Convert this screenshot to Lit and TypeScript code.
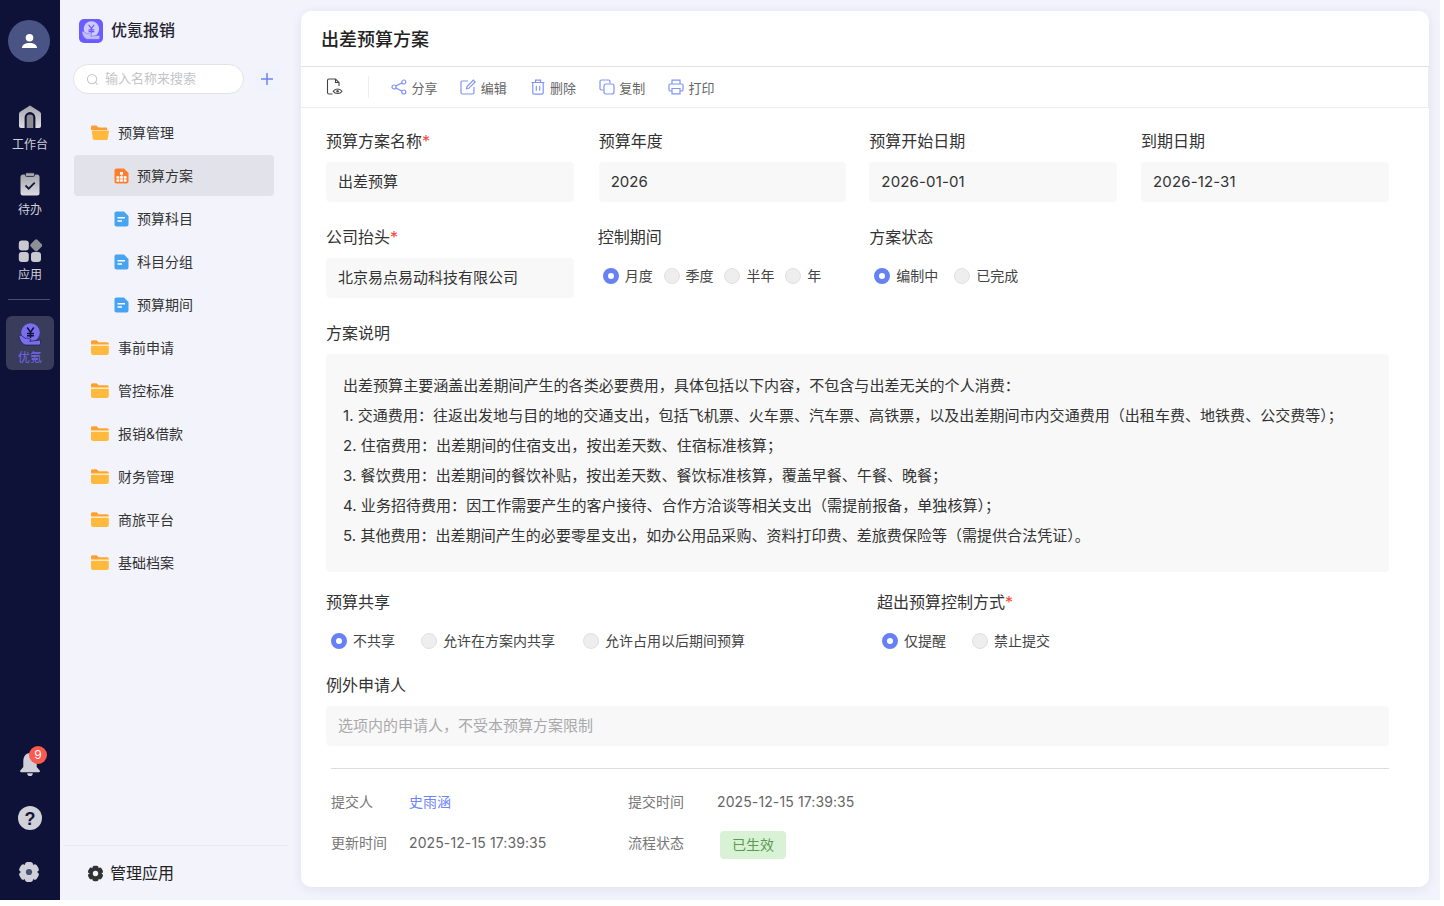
import { LitElement, html, css, svg } from 'lit';
import { customElement } from 'lit/decorators.js';

const railGrad = svg`<defs><linearGradient id="rg" x1="0" y1="0" x2="0" y2="1"><stop offset="0" stop-color="#a4a5aa"/><stop offset="1" stop-color="#dcdce2"/></linearGradient></defs>`;

const coinHand = (coin: string, hand: string, mark: string) => svg`
  <circle cx="12.5" cy="9.500" r="9.300" fill=${coin}/>
  <path d="M12.500 9.500V15M9 10.500h7M9 12.700h7M9.200 4.500l3.300 4.600 3.300-4.600" fill="none" stroke=${mark} stroke-width="1.500"/>
  <path d="M1 13.200c.6-1.200 1.600-1.200 2.600-.5l3.600 2.600c1.800-.6 4.400.2 6 1.600l-1.600 1.400 6-.6 4.900-.7v3.600c0 .9-.6 1.400-1.400 1.400H8.400c-3.600 0-6.400-3.800-7.400-8.800z" fill=${hand} stroke=${mark} stroke-width=".6"/>`;

const gear = (fill: string, hole: string, r: number) => svg`
  ${[0, 60, 120, 180, 240, 300].map(
    (a) => svg`<rect x="7.600" y="1" width="8.800" height="8" rx="3" fill=${fill} transform="rotate(${a} 12 12)"/>`
  )}
  <circle cx="12" cy="12" r="7.500" fill=${fill}/>
  <circle cx="12" cy="12" r=${r} fill=${hole}/>`;

const icons = {
  home: svg`<svg viewBox="0 0 24 24" width="24" height="24">${railGrad}
    <path d="M12 .5 21.800 6.700c.8.500 1.200 1.200 1.200 2.100V21c0 1.300-.8 2-2 2h-3.600V12.500a5.400 5.400 0 0 0-10.800 0V23H3c-1.200 0-2-.7-2-2V8.800c0-.9.400-1.600 1.200-2.100z" fill="url(#rg)"/>
    <path d="M8.700 23V12.700a3.300 3.300 0 0 1 6.600 0V23z" fill="#8b8c92"/></svg>`,
  todo: svg`<svg viewBox="0 0 24 24" width="24" height="24">${railGrad}
    <rect x="2.500" y="2.500" width="19" height="21" rx="2.500" fill="url(#rg)"/>
    <rect x="7.500" y=".8" width="9" height="3.600" rx="1" fill="#aaabb0" stroke="#0e1238" stroke-width=".8"/>
    <path d="m7.500 13.500 3.200 3.200 6-6" fill="none" stroke="#14173a" stroke-width="1.800"/></svg>`,
  apps: svg`<svg viewBox="0 0 24 24" width="24" height="24">
    <rect x=".8" y="1.500" width="10" height="10" rx="3" fill="#c9cacf"/>
    <rect x="13.500" y="1.600" width="9.500" height="9.500" rx="2" fill="#8f9095" transform="rotate(45 18.200 6.300)"/>
    <rect x=".8" y="13" width="10" height="10" rx="3" fill="#c9cacf"/>
    <rect x="13" y="13" width="10" height="10" rx="3" fill="#c9cacf"/></svg>`,
  bell: svg`<svg viewBox="0 0 24 24" width="24" height="24">
    <path d="M12 1C7.500 1 5.300 5 5.300 9.500V15l-3 3.500c-.6.800-.2 1.700.8 1.700h17.800c1 0 1.400-.9.800-1.700l-3-3.500V9.500C18.700 5 16.500 1 12 1z" fill="#cfd0d8"/>
    <path d="M9.200 21.200h5.600a2.800 2.800 0 0 1-5.600 0z" fill="#cfd0d8"/></svg>`,
  help: svg`<svg viewBox="0 0 24 24" width="24" height="24"><circle cx="12" cy="12" r="12" fill="#cfd0d8"/>
    <text x="12" y="18.500" text-anchor="middle" font-size="18" font-weight="700" font-family="Liberation Sans, sans-serif" fill="#14173a">?</text></svg>`,
  search: svg`<svg viewBox="0 0 14 14" width="13" height="13"><circle cx="6.500" cy="6.500" r="5" fill="none" stroke="#c4c5ca" stroke-width="1.100"/><path d="m10.200 10.200 2.300 2.300" stroke="#c4c5ca" stroke-width="1.100"/></svg>`,
  plus: svg`<svg viewBox="0 0 14 14" width="14" height="14"><path d="M7 1v12M1 7h12" stroke="#6c82f0" stroke-width="1.500"/></svg>`,
  folderOpen: svg`<svg viewBox="0 0 18 16" width="18" height="16">
    <path d="M0 2c0-.8.500-1.500 1.500-1.500h4L7.500 2.500H15c.8 0 1.200.4 1.200 1.200V5H0z" fill="#ff9d33"/>
    <path d="M1.600 13 .8 6.500c0-.6.400-1 1-1H17c.7 0 1.100.4 1 1l-1.300 7.300c-.1.800-.7 1.200-1.400 1.200H3.300C2.400 15 1.700 14 1.600 13z" fill="#ffb93d"/></svg>`,
  folder: svg`<svg viewBox="0 0 18 16" width="18" height="16">
    <path d="M1.500.5h4.200l2 2H16c1 0 1.800.8 1.800 1.800V13c0 1.100-.9 2-2 2H2c-1.100 0-2-.9-2-2V2C0 1.200.7.500 1.500.5z" fill="#ffb93d"/>
    <path d="M0 2C0 1.200.7.500 1.500.5h4.200l2 2H16c.9 0 1.500.5 1.700 1.200H0z" fill="#ff9d33"/>
    <path d="M0 5.200h18" stroke="#fff" stroke-width="1"/></svg>`,
  doc: svg`<svg viewBox="0 0 15 16" width="15" height="16">
    <path d="M2.500.5H10l4.500 4.500v8.500c0 1.200-.9 2-2 2h-10c-1.200 0-2-.8-2-2v-11c0-1.100.8-2 2-2z" fill="#46a4f3"/>
    <path d="M3.500 6.700h7.500M3.500 10h4.500" stroke="#fff" stroke-width="1.400"/></svg>`,
  org: svg`<svg viewBox="0 0 15 16" width="15" height="16">
    <path d="M2.500.5H10l4.500 4.500v8.500c0 1.200-.9 2-2 2h-10c-1.200 0-2-.8-2-2v-11c0-1.100.8-2 2-2z" fill="#ff7d2e"/>
    <g fill="#fff"><rect x="6" y="4" width="3" height="2.800"/><rect x="7.200" y="6.800" width=".6" height="1.400"/>
    <rect x="2.500" y="8.200" width="2.800" height="2.400"/><rect x="6.100" y="8.200" width="2.800" height="2.400"/><rect x="9.700" y="8.200" width="2.800" height="2.400"/>
    <rect x="2.500" y="11.300" width="2.800" height="2.400"/><rect x="6.100" y="11.300" width="2.800" height="2.400"/><rect x="9.700" y="11.300" width="2.800" height="2.400"/></g></svg>`,
  docEye: svg`<svg viewBox="0 0 18 18" width="18" height="18" fill="none" stroke="#444" stroke-width="1.100">
    <path d="M6.500 16H3c-.9 0-1.500-.6-1.500-1.500V2.500C1.500 1.600 2.100 1 3 1h6.500L13 4.500V8"/><path d="M9.500 1v3.500H13"/>
    <path d="M7.200 13.200c1.800-3 7-3 8.800 0-1.800 3-7 3-8.800 0z"/><circle cx="11.600" cy="13.200" r="1.200" fill="#444" stroke="none"/></svg>`,
  share: svg`<svg viewBox="0 0 16 16"><circle cx="3" cy="8" r="2"/><circle cx="12.800" cy="3" r="2"/><circle cx="12.800" cy="13" r="2"/><path d="m4.800 7 6.200-3.100M4.800 9l6.200 3.100"/></svg>`,
  edit: svg`<svg viewBox="0 0 16 16"><path d="M8 2H2.500C1.600 2 1 2.600 1 3.500v10c0 .9.600 1.500 1.500 1.500h10c.9 0 1.500-.6 1.500-1.500V8"/><path d="m6.500 9.800.5-2.300L13.300 1.200l1.800 1.800-6.300 6.300z"/></svg>`,
  trash: svg`<svg viewBox="0 0 16 16"><path d="M1.500 3.500h13M5.500 3.500V1.200h5v2.300"/><path d="M2.800 3.500v10.300c0 .8.500 1.300 1.300 1.300h7.800c.8 0 1.300-.5 1.300-1.300V3.500"/><path d="M6.300 6.800v5M9.700 6.800v5"/></svg>`,
  copy: svg`<svg viewBox="0 0 16 16"><path d="M4.300 11H2.500C1.600 11 1 10.400 1 9.500v-7C1 1.600 1.600 1 2.500 1h7c.9 0 1.500.6 1.500 1.500v1.800"/><rect x="5" y="5" width="10" height="10" rx="2"/></svg>`,
  print: svg`<svg viewBox="0 0 16 16"><path d="M4 5V1.200h8V5"/><path d="M4 12H2.300C1.500 12 1 11.500 1 10.700V6.300C1 5.500 1.500 5 2.300 5h11.400c.8 0 1.300.5 1.300 1.300v4.400c0 .8-.5 1.300-1.300 1.300H12"/><path d="M4 9.500h8v5.300H4z"/></svg>`,
};

const rail = [
  { icon: icons.home, label: '工作台', cls: 'top0' },
  { icon: icons.todo, label: '待办', cls: 'top2' },
  { icon: icons.apps, label: '应用', cls: 'top4' },
];

const tree = [
  { label: '预算管理', open: true, kids: [
    { label: '预算方案', icon: icons.org, active: true },
    { label: '预算科目', icon: icons.doc },
    { label: '科目分组', icon: icons.doc },
    { label: '预算期间', icon: icons.doc },
  ] },
  { label: '事前申请' },
  { label: '管控标准' },
  { label: '报销&借款' },
  { label: '财务管理' },
  { label: '商旅平台' },
  { label: '基础档案' },
];

const tools = [
  { icon: icons.share, label: '分享' },
  { icon: icons.edit, label: '编辑' },
  { icon: icons.trash, label: '删除' },
  { icon: icons.copy, label: '复制' },
  { icon: icons.print, label: '打印' },
];

const notes = [
  '出差预算主要涵盖出差期间产生的各类必要费用，具体包括以下内容，不包含与出差无关的个人消费：',
  '1. 交通费用：往返出发地与目的地的交通支出，包括飞机票、火车票、汽车票、高铁票，以及出差期间市内交通费用（出租车费、地铁费、公交费等）；',
  '2. 住宿费用：出差期间的住宿支出，按出差天数、住宿标准核算；',
  '3. 餐饮费用：出差期间的餐饮补贴，按出差天数、餐饮标准核算，覆盖早餐、午餐、晚餐；',
  '4. 业务招待费用：因工作需要产生的客户接待、合作方洽谈等相关支出（需提前报备，单独核算）；',
  '5. 其他费用：出差期间产生的必要零星支出，如办公用品采购、资料打印费、差旅费保险等（需提供合法凭证）。',
];

@customElement('app-root')
export class AppRoot extends LitElement {
  static styles = css`
    :host {
      display: flex;
      width: 1440px;
      height: 900px;
      overflow: hidden;
      background: #f2f3fb;
      color: #333;
      font-family: Inter, 'Noto Sans CJK SC', sans-serif;
      font-size: 14px;
    }
    svg { display: block; flex: none; }

    /* far left rail */
    .rail {
      width: 60px;
      flex: none;
      background: #0e1238;
      display: flex;
      flex-direction: column;
      align-items: center;
      padding-top: 20px;
      box-sizing: border-box;
    }
    .avatar {
      width: 42px;
      height: 42px;
      border-radius: 50%;
      background: #4a5484;
      display: flex;
      align-items: center;
      justify-content: center;
      margin: 0 2px 43px 0;
    }
    .rail-item {
      height: 65px;
      color: #cfd0d8;
      font-size: 12px;
      line-height: 16px;
      text-align: center;
    }
    .rail-icon { height: 32px; box-sizing: border-box; display: flex; justify-content: center; }
    .rail-icon.top2 { padding-top: 2px; }
    .rail-icon.top4 { padding-top: 4px; }
    .rail-line { width: 42px; height: 1px; background: #4a4d68; margin: -1px 2px 16px 0; }
    .rail-active {
      width: 48px;
      height: 54px;
      border-radius: 6px;
      background: #3a3c5c;
      color: #7468ea;
      font-size: 12px;
      line-height: 16px;
      display: flex;
      flex-direction: column;
      align-items: center;
      padding-top: 7px;
      box-sizing: border-box;
      gap: 3px;
    }
    .rail-foot {
      margin-top: auto;
      display: flex;
      flex-direction: column;
      align-items: center;
      gap: 30px;
      padding-bottom: 17px;
    }
    .bell { position: relative; }
    .badge {
      position: absolute;
      top: -6px;
      left: 11px;
      width: 18px;
      height: 18px;
      border-radius: 50%;
      background: #fb5a4e;
      color: #fff;
      font-size: 12px;
      line-height: 18px;
      text-align: center;
    }
    .gear-rail { margin: 1px 2px 0 0; }

    /* tree panel */
    .panel {
      width: 230px;
      flex: none;
      display: flex;
      flex-direction: column;
      box-sizing: border-box;
      padding-left: 3px;
    }
    .brand {
      display: flex;
      align-items: center;
      gap: 8px;
      height: 24px;
      padding: 19px 0 0 16px;
      font-size: 16px;
      font-weight: 500;
      color: #1f2230;
      line-height: 24px;
    }
    .brand span.txt { margin-bottom: 2px; }
    .logo {
      width: 24px;
      height: 24px;
      border-radius: 5px;
      background: #6a5cff;
      display: flex;
      align-items: center;
      justify-content: center;
    }
    .search-row {
      display: flex;
      align-items: center;
      padding: 21px 0 0 10px;
      gap: 11px;
    }
    .search {
      width: 171px;
      height: 30px;
      box-sizing: border-box;
      border: 1px solid #e3e3e7;
      border-radius: 15px;
      background: #fff;
      display: flex;
      align-items: center;
      gap: 6px;
      padding-left: 12px;
      font-size: 13px;
      color: #c4c5ca;
    }
    .search span { margin-bottom: 3px; }
    .plus {
      width: 24px;
      height: 24px;
      border-radius: 4px;
      background: #f0f2fc;
      display: flex;
      align-items: center;
      justify-content: center;
    }
    .tree { padding: 18px 0 0 11px; flex: 1; }
    .node {
      width: 200px;
      height: 41px;
      margin-bottom: 2px;
      border-radius: 4px;
      display: flex;
      align-items: center;
      gap: 9px;
      padding-left: 17px;
      box-sizing: border-box;
      color: #333;
    }
    .node span { margin-bottom: 2px; }
    .node.kid { padding-left: 40px; gap: 8px; }
    .node.active { background: #e2e3ea; }
    .panel-foot {
      margin: 0 2px 0 0;
      height: 54px;
      border-top: 1px solid #e8e8ee;
      display: flex;
      align-items: center;
      gap: 6px;
      padding-left: 24px;
      font-size: 16px;
      color: #222;
    }
    .panel-foot span { margin-bottom: 3px; }

    /* card */
    .card {
      margin: 11px 0 13px 11px;
      width: 1128px;
      background: #fff;
      border-radius: 10px;
      box-shadow: 0 2px 12px rgba(30, 40, 90, 0.08);
      display: flex;
      flex-direction: column;
    }
    .title {
      height: 55px;
      line-height: 57px;
      padding-left: 20px;
      font-size: 18px;
      font-weight: 500;
      color: #222;
      border-bottom: 1px solid #e3e3e6;
    }
    .toolbar {
      height: 40px;
      display: flex;
      align-items: center;
      padding-left: 25px;
      border-bottom: 1px solid #ececef;
      border-right: 1px solid #ececef;
      font-size: 13px;
      color: #666;
    }
    .tool-sep { width: 1px; height: 22px; background: #eeeef0; margin: 0 22px 0 24px; }
    .tool { display: flex; align-items: center; gap: 4.5px; margin-right: 22.75px; }
    .tool svg {
      width: 16px;
      height: 16px;
      fill: none;
      stroke: #8094f5;
      stroke-width: 1.2;
    }

    .form { padding: 21px 40px 0 25px; }
    .grid4 {
      display: grid;
      grid-template-columns: repeat(4, 1fr);
      column-gap: 23.67px;
      margin-bottom: 23px;
    }
    .nudge { margin-left: 1px; }
    .grid2 {
      display: grid;
      grid-template-columns: 551px 1fr;
      margin-bottom: 14px;
    }
    .label {
      font-size: 16px;
      line-height: 24px;
      margin-bottom: 9px;
      color: #333;
    }
    .label i { color: #f5483b; font-style: normal; }
    .input {
      height: 40px;
      line-height: 40px;
      border-radius: 4px;
      background: #f8f8f8;
      padding-left: 12px;
      font-size: 15px;
      color: #333;
    }
    .input.num { letter-spacing: 0.15px; }
    .input.ph { color: #a9a9ad; }
    .radios { height: 36px; display: flex; align-items: center; padding-left: 5px; }
    .radio { display: flex; align-items: center; gap: 6px; color: #444; }
    .radio span { margin-bottom: 2px; }
    .radio i {
      width: 16px;
      height: 16px;
      box-sizing: border-box;
      border-radius: 50%;
      background: #eee;
      border: 1px solid #e0e0e0;
    }
    .radio.on i { background: #fff; border: 5px solid #6680f5; }
    .gap-s { gap: 10.9px; }
    .gap-m { gap: 16px; }
    .gap-l { gap: 26px; }
    .gap-l .radio:nth-child(3) { margin-left: 2px; }
    .notes {
      background: #f8f8f8;
      border-radius: 4px;
      padding: 17px 17px 21px;
      margin-bottom: 18px;
      font-size: 15px;
      line-height: 30px;
      letter-spacing: 0.04px;
      color: #333;
    }
    .meta {
      margin: 22px 0 0 5px;
      border-top: 1px solid #dcdcde;
      padding-top: 19px;
      display: grid;
      grid-template-columns: 78px 219px 89px 1fr;
      grid-auto-rows: 28px;
      row-gap: 13px;
      line-height: 28px;
      color: #666;
    }
    .meta .k { color: #777; }
    .meta .num { letter-spacing: 0.11px; }
    .link { color: #6d86f5; }
    .state {
      display: inline-block;
      margin: 2px 0 0 3px;
      width: 66px;
      height: 28px;
      border-radius: 4px;
      background: #d9f2d5;
      color: #5a9a55;
      text-align: center;
    }
  `;

  private radios(items: string[], gap: string) {
    return html`<div class="radios ${gap}">
      ${items.map((r, i) => html`<label class="radio ${i === 0 ? 'on' : ''}"><i></i><span>${r}</span></label>`)}
    </div>`;
  }

  private field(label: string, value: string, opts: { req?: boolean; num?: boolean; nudge?: boolean } = {}) {
    return html`<div class=${opts.nudge ? 'nudge' : ''}>
      <div class="label">${label}${opts.req ? html`<i>*</i>` : ''}</div>
      <div class="input ${opts.num ? 'num' : ''}">${value}</div>
    </div>`;
  }

  render() {
    return html`
      <nav class="rail">
        <div class="avatar">
          <svg viewBox="0 0 18 18" width="17" height="17"><circle cx="9" cy="5" r="4" fill="#fff"/><path d="M1 16c0-3.500 3.500-5.500 8-5.500s8 2 8 5.500z" fill="#fff"/></svg>
        </div>
        ${rail.map((r) => html`<div class="rail-item"><div class="rail-icon ${r.cls}">${r.icon}</div><span>${r.label}</span></div>`)}
        <div class="rail-line"></div>
        <div class="rail-active">
          <svg viewBox="0 0 24 24" width="24" height="24">${coinHand('#7b6ff0', '#7b6ff0', '#0e1238')}</svg>
          <span>优氪</span>
        </div>
        <div class="rail-foot">
          <div class="bell">${icons.bell}<span class="badge">9</span></div>
          ${icons.help}
          <svg class="gear-rail" viewBox="0 0 24 24" width="22" height="22">${gear('#cfd0d8', '#4a4f7a', 3.400)}</svg>
        </div>
      </nav>

      <aside class="panel">
        <div class="brand">
          <span class="logo"><svg viewBox="0 0 24 24" width="20" height="20">${coinHand('#cfcbff', '#c3beff', '#6a5cff')}</svg></span>
          <span class="txt">优氪报销</span>
        </div>
        <div class="search-row">
          <div class="search">${icons.search}<span>输入名称来搜索</span></div>
          <span class="plus">${icons.plus}</span>
        </div>
        <div class="tree">
          ${tree.map((n) => html`
            <div class="node">${n.open ? icons.folderOpen : icons.folder}<span>${n.label}</span></div>
            ${(n.kids ?? []).map((k) => html`
              <div class="node kid ${k.active ? 'active' : ''}">${k.icon}<span>${k.label}</span></div>
            `)}
          `)}
        </div>
        <div class="panel-foot">
          <svg viewBox="0 0 24 24" width="17" height="17">${gear('#333', '#f2f3fb', 3.800)}</svg>
          <span>管理应用</span>
        </div>
      </aside>

      <main class="card">
        <div class="title">出差预算方案</div>
        <div class="toolbar">
          ${icons.docEye}
          <span class="tool-sep"></span>
          ${tools.map((t) => html`<span class="tool">${t.icon}${t.label}</span>`)}
        </div>
        <div class="form">
          <div class="grid4">
            ${this.field('预算方案名称', '出差预算', { req: true })}
            ${this.field('预算年度', '2026', { nudge: true })}
            ${this.field('预算开始日期', '2026-01-01', { num: true })}
            ${this.field('到期日期', '2026-12-31', { num: true })}
          </div>
          <div class="grid4">
            ${this.field('公司抬头', '北京易点易动科技有限公司', { req: true })}
            <div>
              <div class="label">控制期间</div>
              ${this.radios(['月度', '季度', '半年', '年'], 'gap-s')}
            </div>
            <div>
              <div class="label">方案状态</div>
              ${this.radios(['编制中', '已完成'], 'gap-m')}
            </div>
          </div>
          <div class="label">方案说明</div>
          <div class="notes">${notes.map((n) => html`<div>${n}</div>`)}</div>
          <div class="grid2">
            <div>
              <div class="label">预算共享</div>
              ${this.radios(['不共享', '允许在方案内共享', '允许占用以后期间预算'], 'gap-l')}
            </div>
            <div>
              <div class="label">超出预算控制方式<i>*</i></div>
              ${this.radios(['仅提醒', '禁止提交'], 'gap-l')}
            </div>
          </div>
          <div class="label">例外申请人</div>
          <div class="input ph">选项内的申请人，不受本预算方案限制</div>
          <div class="meta">
            <span class="k">提交人</span><span class="link">史雨涵</span>
            <span class="k">提交时间</span><span class="num">2025-12-15 17:39:35</span>
            <span class="k">更新时间</span><span class="num">2025-12-15 17:39:35</span>
            <span class="k">流程状态</span><span><span class="state">已生效</span></span>
          </div>
        </div>
      </main>
    `;
  }
}
